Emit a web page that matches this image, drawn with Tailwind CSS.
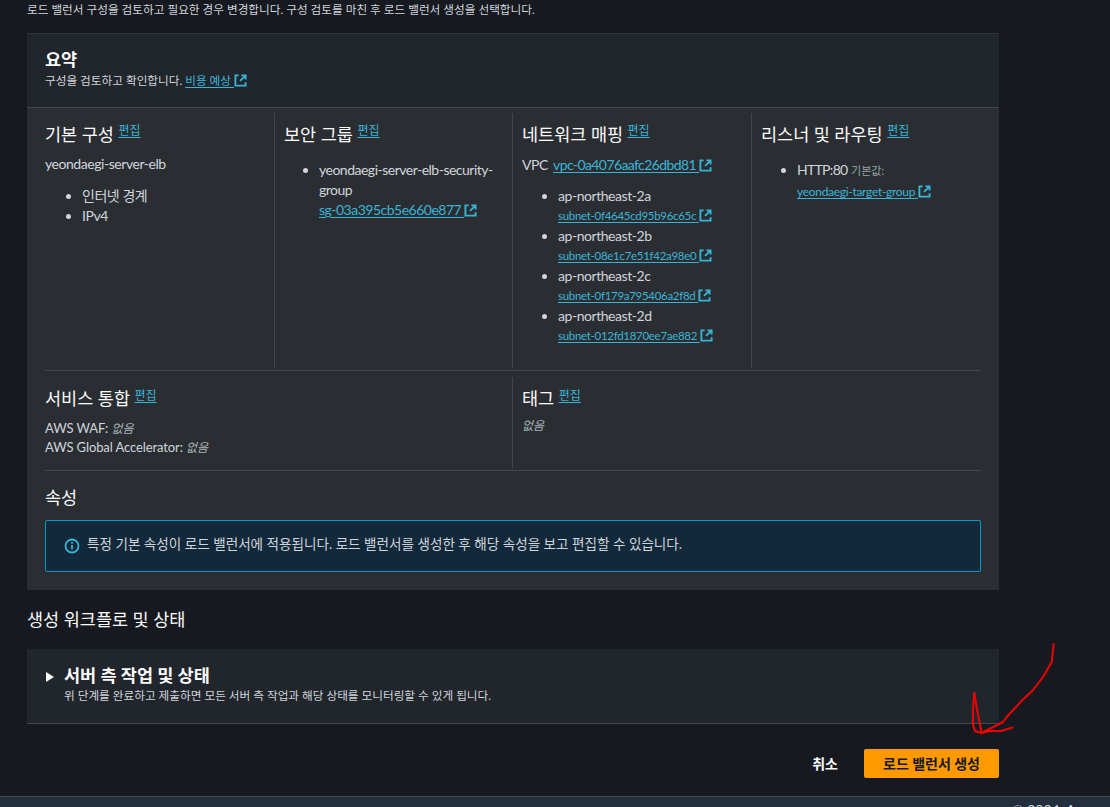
<!DOCTYPE html>
<html lang="ko">
<head>
    <meta charset="UTF-8">
    <title>로드 밸런서 생성</title>
    <script src="https://cdn.jsdelivr.net/npm/@tailwindcss/browser@4"></script>
</head>
<body class="bg-[#16191f] text-[#d1d5db] font-['Lato','Noto_Sans_CJK_KR',sans-serif] text-sm h-[807px] overflow-hidden relative">
    <svg width="0" height="0" class="absolute">
        <symbol id="ext" viewBox="0 0 14 14">
            <path d="M5 1.5H1.5v11h11V9" fill="none" stroke="currentColor" stroke-width="2"/>
            <path d="M6.5 7.5L12 2M8 1.5h4.5V6" fill="none" stroke="currentColor" stroke-width="2"/>
        </symbol>
    </svg>

    <main class="w-[972px] ml-[27px]">
        <p class="text-[11.65px] leading-[18px] pt-[1px] h-[33px] text-[#d1d5db]">로드 밸런서 구성을 검토하고 필요한 경우 변경합니다. 구성 검토를 마친 후 로드 밸런서 생성을 선택합니다.</p>

        <section class="bg-[#2a2e33] h-[557px] border-t border-[#2f343b]">
            <header class="bg-[#21252c] h-[74px] border-b border-[#414750] px-[18px] pt-[16px]">
                <h2 class="text-[17.5px] leading-[20px] font-bold text-[#fafafa]">요약</h2>
                <p class="text-[11.65px] leading-[18px] pt-[2px] text-[#d1d5db]">구성을 검토하고 확인합니다. <a class="text-[#39b4d5] underline underline-offset-2">비용 예상 <svg class="inline w-[13px] h-[13px] align-[-2px]"><use href="#ext"/></svg></a></p>
            </header>

            <div class="mx-[18px]">
                <div class="grid grid-cols-[229px_238px_239px_230px] pt-[5px] h-[263px] border-b border-[#414750]">
                    <div class="h-[255px] pt-[9px] tracking-[-0.45px]">
                        <h3 class="text-[17.5px] tracking-normal leading-[26px] text-[#fafafa]">기본 구성 <a class="text-xs align-[6px] text-[#39b4d5] underline underline-offset-2">편집</a></h3>
                        <p class="mt-[6px] leading-[20px]">yeondaegi-server-elb</p>
                        <ul class="list-disc pl-[37px] mt-[12px] leading-[20px]">
                            <li>인터넷 경계</li>
                            <li>IPv4</li>
                        </ul>
                    </div>
                    <div class="h-[255px] pt-[9px] pl-[9px] pr-[12px] border-l border-[#414750] tracking-[-0.5px]">
                        <h3 class="text-[17.5px] tracking-normal leading-[26px] text-[#fafafa]">보안 그룹 <a class="text-xs align-[6px] text-[#39b4d5] underline underline-offset-2">편집</a></h3>
                        <ul class="list-disc pl-[35px] mt-[12px] leading-[20px]">
                            <li>yeondaegi-server-elb-security-group<br><a class="text-[#39b4d5] underline underline-offset-2">sg-03a395cb5e660e877 <svg class="inline w-[13px] h-[13px] align-[-2px]"><use href="#ext"/></svg></a></li>
                        </ul>
                    </div>
                    <div class="h-[255px] pt-[9px] pl-[9px] border-l border-[#414750] tracking-[-0.45px]">
                        <h3 class="text-[17.5px] tracking-normal leading-[26px] text-[#fafafa]">네트워크 매핑 <a class="text-xs align-[6px] text-[#39b4d5] underline underline-offset-2">편집</a></h3>
                        <p class="mt-[7px] leading-[20px]">VPC <a class="ml-[2px] tracking-[-0.6px] text-[#39b4d5] underline underline-offset-2">vpc-0a4076aafc26dbd81 <svg class="inline w-[13px] h-[13px] align-[-2px]"><use href="#ext"/></svg></a></p>
                        <ul class="list-disc pl-[36px] mt-[11px] leading-[20px]">
                            <li>ap-northeast-2a<a class="block h-[20px] text-[11.5px] tracking-[-0.3px] text-[#39b4d5] underline underline-offset-2">subnet-0f4645cd95b96c65c <svg class="inline w-[13px] h-[13px] align-[-2px]"><use href="#ext"/></svg></a></li>
                            <li>ap-northeast-2b<a class="block h-[20px] text-[11.5px] tracking-[-0.3px] text-[#39b4d5] underline underline-offset-2">subnet-08e1c7e51f42a98e0 <svg class="inline w-[13px] h-[13px] align-[-2px]"><use href="#ext"/></svg></a></li>
                            <li>ap-northeast-2c<a class="block h-[20px] text-[11.5px] tracking-[-0.3px] text-[#39b4d5] underline underline-offset-2">subnet-0f179a795406a2f8d <svg class="inline w-[13px] h-[13px] align-[-2px]"><use href="#ext"/></svg></a></li>
                            <li>ap-northeast-2d<a class="block h-[20px] text-[11.5px] tracking-[-0.3px] text-[#39b4d5] underline underline-offset-2">subnet-012fd1870ee7ae882 <svg class="inline w-[13px] h-[13px] align-[-2px]"><use href="#ext"/></svg></a></li>
                        </ul>
                    </div>
                    <div class="h-[255px] pt-[9px] pl-[9px] border-l border-[#414750]">
                        <h3 class="text-[17.5px] leading-[26px] text-[#fafafa]">리스너 및 라우팅 <a class="text-xs align-[6px] text-[#39b4d5] underline underline-offset-2">편집</a></h3>
                        <ul class="list-disc pl-[36px] mt-[12px] leading-[20px]">
                            <li><span class="tracking-[-0.7px]">HTTP:80</span> <span class="text-[11px] text-[#95a5a6]">기본값:</span><br><a class="text-xs tracking-[-0.3px] text-[#39b4d5] underline underline-offset-2">yeondaegi-target-group <svg class="inline w-[13px] h-[13px] align-[-2px]"><use href="#ext"/></svg></a></li>
                        </ul>
                    </div>
                </div>

                <div class="grid grid-cols-[467px_469px] pt-[6px] h-[100px] border-b border-[#414750]">
                    <div class="h-[91px] pt-[9px]">
                        <h3 class="text-[17.5px] leading-[26px] text-[#fafafa]">서비스 통합 <a class="text-xs align-[5px] text-[#39b4d5] underline underline-offset-2">편집</a></h3>
                        <p class="mt-[7px] text-[13px] tracking-[-0.1px] leading-[19px]">AWS WAF: <i class="text-xs text-[#aab7b8]">없음</i></p>
                        <p class="text-[13px] tracking-[-0.1px] leading-[19px]">AWS Global Accelerator: <i class="text-xs text-[#aab7b8]">없음</i></p>
                    </div>
                    <div class="h-[91px] pt-[9px] pl-[9px] border-l border-[#414750]">
                        <h3 class="text-[17.5px] leading-[26px] text-[#fafafa]">태그 <a class="text-xs align-[5px] text-[#39b4d5] underline underline-offset-2">편집</a></h3>
                        <p class="mt-[5px] text-xs leading-[18px]"><i class="text-[#aab7b8]">없음</i></p>
                    </div>
                </div>

                <h3 class="text-[17.5px] leading-[26px] mt-[14px] text-[#fafafa]">속성</h3>
                <div class="mt-[9px] h-[52px] bg-[#12293b] border border-[#0099cc] rounded-[2px] flex items-center pl-[18px] gap-[7px]">
                    <svg width="16" height="16" viewBox="0 0 16 16" class="text-[#39b4d5]" fill="none" stroke="currentColor" stroke-width="1.8"><circle cx="8" cy="8" r="6.5"/><path d="M8 7v4.5M8 4v1.7"/></svg>
                    <p class="text-[#d1d5db] text-[13.57px] leading-[20px] -mt-[4px]">특정 기본 속성이 로드 밸런서에 적용됩니다. 로드 밸런서를 생성한 후 해당 속성을 보고 편집할 수 있습니다.</p>
                </div>
            </div>
        </section>

        <h2 class="text-[17.5px] leading-[24px] mt-[18px] text-[#fafafa]">생성 워크플로 및 상태</h2>

        <section class="mt-[17px] h-[75px] bg-[#21252c] border-b border-[#414750] flex pl-[19px] pt-[17px] gap-[10px]">
            <svg width="8" height="10" viewBox="0 0 8 10" class="mt-[6px]"><path d="M0 0l8 5-8 5z" fill="#fafafa"/></svg>
            <div>
                <h2 class="text-[17.5px] leading-[20px] font-bold text-[#fafafa]">서버 측 작업 및 상태</h2>
                <p class="text-[11.65px] leading-[20px] text-[#d1d5db]">위 단계를 완료하고 제출하면 모든 서버 측 작업과 해당 상태를 모니터링할 수 있게 됩니다.</p>
            </div>
        </section>

        <div class="flex justify-end items-center mt-[25px] gap-[26px]">
            <button class="font-bold text-[#fafafa] text-sm">취소</button>
            <button class="w-[135px] h-[29px] bg-[#ff9900] rounded-[2px] text-[#16191f] font-bold text-sm">로드 밸런서 생성</button>
        </div>
    </main>

    <footer class="absolute left-0 right-0 top-[796px] h-[11px] bg-[#232f3e] border-t border-[#414750] overflow-hidden">
        <p class="absolute left-[1012px] top-[3px] w-[200px] text-sm text-[#d5dbdb]">© 2024, Amazon Web Services</p>
    </footer>

    <!-- hand drawn red arrow on top of the screenshot -->
    <svg class="absolute left-0 top-0 pointer-events-none" width="1110" height="807" fill="none" stroke="#f00000" stroke-width="2" stroke-linejoin="round" stroke-linecap="round">
        <path d="M1053.7 644L1051.7 662L1043 677L1033 690L1021.7 700.7L1006.7 717L1003 722L981.7 733"/>
        <path d="M974.3 693L973 710L973 725L975 731L981 733L990 731L1001 731L1012.5 727.5"/>
        <path d="M974.3 693L978 715L981.7 733"/>
    </svg>
</body>
</html>
